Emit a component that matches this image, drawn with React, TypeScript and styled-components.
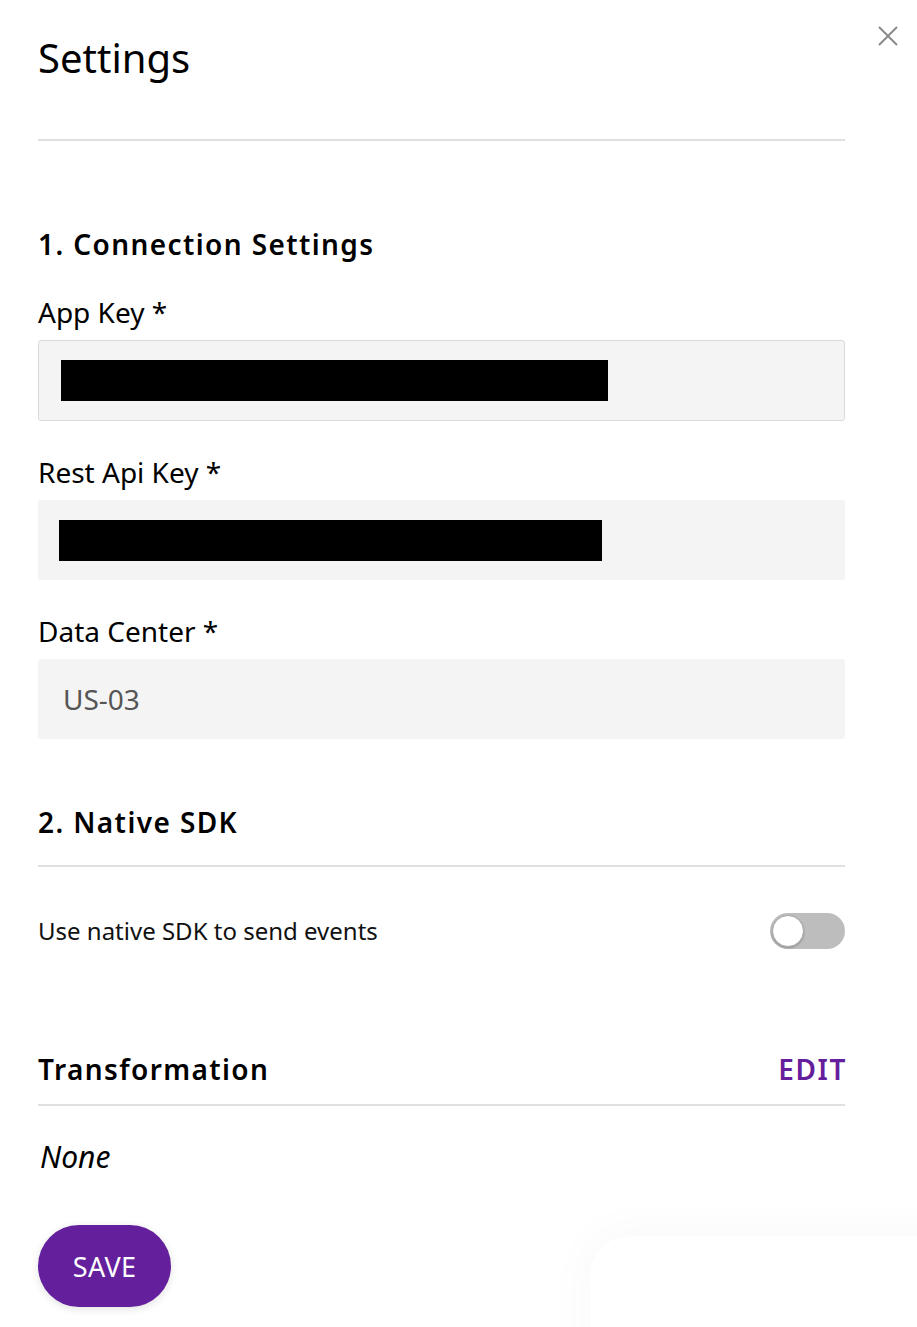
import React, { useState } from 'react';
import styled, { createGlobalStyle } from 'styled-components';

const GlobalStyle = createGlobalStyle`
  html, body {
    margin: 0;
    padding: 0;
    background: #ffffff;
  }
  body {
    font-family: "Noto Sans", "Open Sans", Arial, sans-serif;
    color: #000000;
  }
`;

const PURPLE = '#64209c';

const Page = styled.div`
  position: relative;
  width: 917px;
  height: 1327px;
  box-sizing: border-box;
  padding: 31px 72px 0 38px;
  overflow: hidden;
`;

const Title = styled.h1`
  margin: 0;
  font-size: 40px;
  line-height: 54px;
  font-weight: 400;
  color: #000;
`;

const CloseButton = styled.button`
  position: absolute;
  top: 22px;
  right: 15px;
  width: 28px;
  height: 28px;
  padding: 0;
  border: none;
  background: transparent;
  cursor: pointer;
  display: flex;
  align-items: center;
  justify-content: center;
`;

const Divider = styled.div<{ $top: number }>`
  height: 2px;
  background: #e0e0e0;
  margin-top: ${({ $top }) => $top}px;
`;

const SectionTitle = styled.h2<{ $top: number }>`
  margin: ${({ $top }) => $top}px 0 0;
  font-size: 28px;
  line-height: 38px;
  font-weight: 600;
  letter-spacing: 1.4px;
  color: #000;
`;

const Field = styled.div<{ $top: number }>`
  display: flex;
  flex-direction: column;
  gap: 9px;
  margin-top: ${({ $top }) => $top}px;
`;

const Label = styled.label`
  font-size: 28px;
  line-height: 38px;
  color: #000;
`;

const InputBox = styled.div<{ $bordered?: boolean }>`
  box-sizing: border-box;
  height: ${({ $bordered }) => ($bordered ? 81 : 80)}px;
  display: flex;
  align-items: center;
  padding: 0 22px 0 ${({ $bordered }) => ($bordered ? 22 : 21)}px;
  background: #f4f4f4;
  border: ${({ $bordered }) => ($bordered ? '1px solid #dadada' : 'none')};
  border-radius: 3px;
  font-size: 28px;
  color: #555555;
`;

const Redacted = styled.span<{ $width: number }>`
  display: block;
  width: ${({ $width }) => $width}px;
  height: 41px;
  background: #000;
`;

const ValueText = styled.span`
  padding-left: 4px;
  line-height: 38px;
`;

const ToggleRow = styled.div`
  margin-top: 45px;
  height: 38px;
  display: flex;
  align-items: center;
  justify-content: space-between;
`;

const ToggleText = styled.span`
  font-size: 24px;
  line-height: 32px;
  color: #111;
`;

const Track = styled.button<{ $on: boolean }>`
  position: relative;
  width: 75px;
  height: 36px;
  padding: 0;
  border: none;
  border-radius: 18px;
  background: ${({ $on }) => ($on ? '#b48fd0' : '#bdbdbd')};
  cursor: pointer;
`;

const Knob = styled.span<{ $on: boolean }>`
  position: absolute;
  top: 2px;
  left: ${({ $on }) => ($on ? 41 : 2)}px;
  width: 32px;
  height: 32px;
  box-sizing: border-box;
  border-radius: 50%;
  background: #fff;
  border: 1.5px solid #a9a9a9;
  box-shadow: 0 1px 2px rgba(0, 0, 0, 0.25);
`;

const HeaderRow = styled.div`
  margin-top: 100px;
  display: flex;
  align-items: center;
  justify-content: space-between;
`;

const HeaderTitle = styled.h2`
  margin: 0;
  font-size: 28px;
  line-height: 38px;
  font-weight: 600;
  letter-spacing: 1.4px;
`;

const EditLink = styled.button`
  padding: 0;
  border: none;
  background: transparent;
  font-family: inherit;
  font-size: 28px;
  line-height: 38px;
  font-weight: 600;
  letter-spacing: 1.6px;
  margin-right: -2px;
  color: ${PURPLE};
  cursor: pointer;
`;

const Empty = styled.p`
  margin: 32px 0 0 2px;
  font-size: 30px;
  line-height: 38px;
  font-style: italic;
  color: #000;
`;

const SaveButton = styled.button`
  margin-top: 49px;
  height: 82px;
  width: 133px;
  border: none;
  border-radius: 41px;
  background: ${PURPLE};
  color: #fff;
  font-family: inherit;
  font-size: 27px;
  letter-spacing: 0.3px;
  box-shadow: 0 2px 8px rgba(0, 0, 0, 0.12);
  cursor: pointer;
`;

const FloatingCard = styled.div`
  position: absolute;
  left: 590px;
  top: 1236px;
  width: 400px;
  height: 200px;
  border-radius: 40px 0 0 0;
  background: #fff;
  box-shadow: 0 0 40px 10px rgba(0, 0, 0, 0.025);
`;

const CloseIcon = () => (
  <svg width="20" height="20" viewBox="0 0 20 20">
    <path d="M1 1 L19 19 M19 1 L1 19" stroke="#8a8a8a" strokeWidth="2" fill="none" />
  </svg>
);

export default function App() {
  const [nativeSdk, setNativeSdk] = useState(false);

  return (
    <>
      <GlobalStyle />
      <Page>
        <Title>Settings</Title>
        <CloseButton aria-label="Close">
          <CloseIcon />
        </CloseButton>
        <Divider $top={54} />

        <SectionTitle $top={84}>1. Connection Settings</SectionTitle>
        <Field $top={30}>
          <Label>App Key *</Label>
          <InputBox $bordered>
            <Redacted $width={547} />
          </InputBox>
        </Field>
        <Field $top={32}>
          <Label>Rest Api Key *</Label>
          <InputBox>
            <Redacted $width={543} />
          </InputBox>
        </Field>
        <Field $top={32}>
          <Label>Data Center *</Label>
          <InputBox>
            <ValueText>US-03</ValueText>
          </InputBox>
        </Field>

        <SectionTitle $top={64}>2. Native SDK</SectionTitle>
        <Divider $top={24} />
        <ToggleRow>
          <ToggleText>Use native SDK to send events</ToggleText>
          <Track $on={nativeSdk} onClick={() => setNativeSdk(!nativeSdk)} aria-label="Use native SDK">
            <Knob $on={nativeSdk} />
          </Track>
        </ToggleRow>

        <HeaderRow>
          <HeaderTitle>Transformation</HeaderTitle>
          <EditLink>EDIT</EditLink>
        </HeaderRow>
        <Divider $top={16} />
        <Empty>None</Empty>

        <SaveButton>SAVE</SaveButton>

        <FloatingCard />
      </Page>
    </>
  );
}
